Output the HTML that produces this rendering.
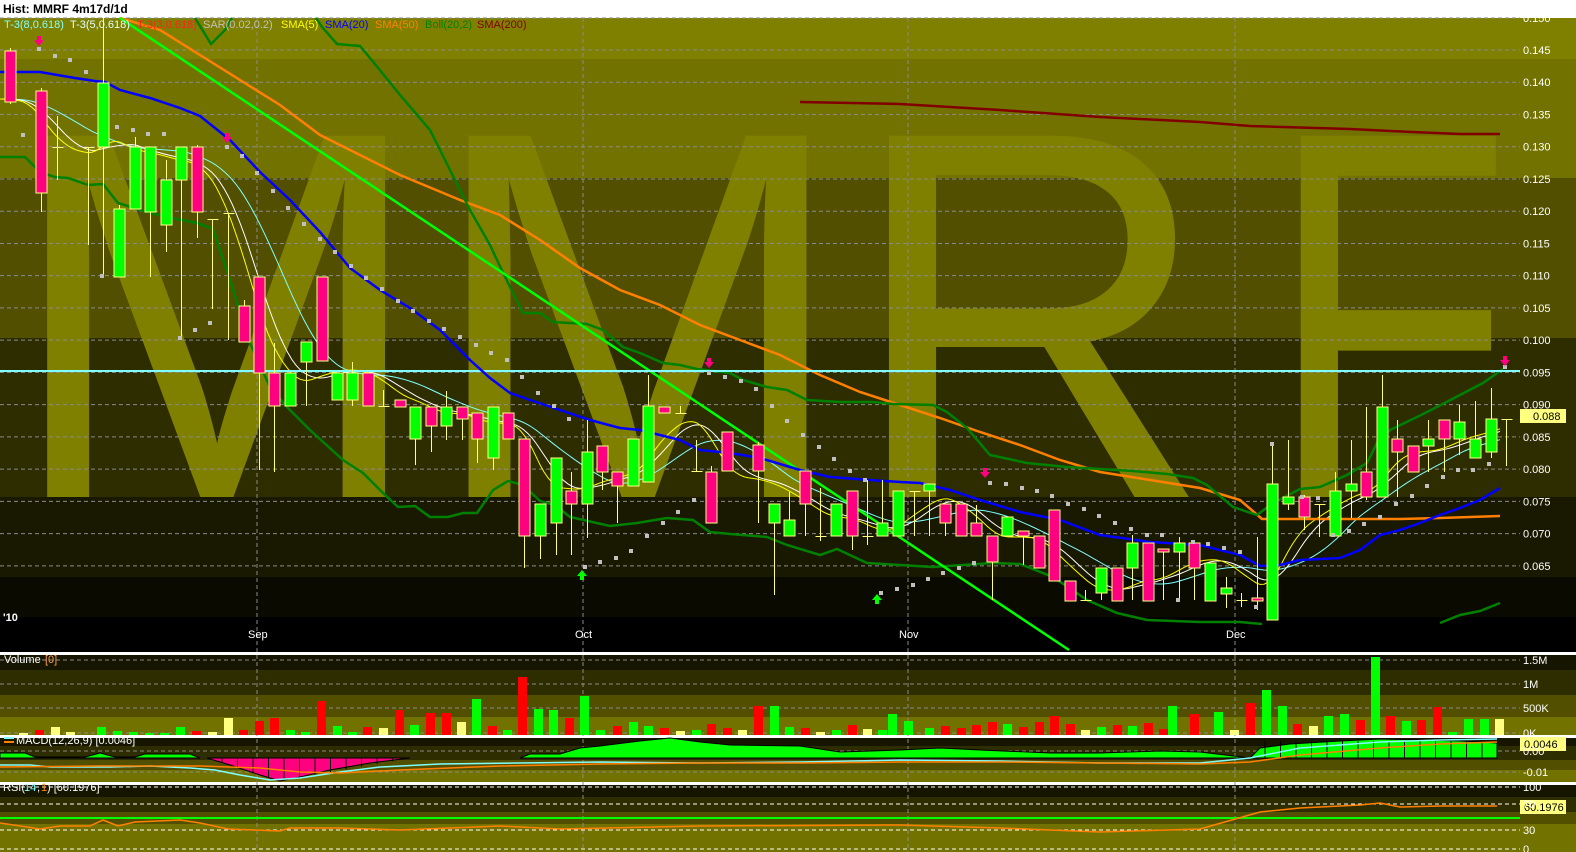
<!DOCTYPE html>
<html><head><meta charset="utf-8"><style>
html,body{margin:0;padding:0;background:#fff;width:1576px;height:852px;overflow:hidden}
svg{display:block;font-family:"Liberation Sans",Arial,sans-serif}
</style></head><body>
<svg id="s" width="1576" height="852" viewBox="0 0 1576 852" xmlns="http://www.w3.org/2000/svg">
<rect x="0" y="0" width="1576" height="18" fill="#fff"/>
<text x="3" y="13" font-size="12" font-weight="bold" fill="#000">Hist: MMRF 4m17d/1d</text>
<g id="bands"></g>
<text y="497" font-size="525" fill="#808000" transform="scale(0.962,1)"><tspan x="6">M</tspan><tspan x="444">M</tspan><tspan x="881">R</tspan></text>
<text x="0" y="497" font-size="525" fill="#808000" transform="translate(1268,0) scale(0.76,1)">F</text>
<g id="grid"></g>
<g id="lines"></g>
<g id="candles"></g>
<g id="top"></g>
<g font-size="11">
<text x="4" y="28" fill="#80ffff">T-3(8,0.618)</text>
<text x="70" y="28" fill="#e0ffff">T-3(5,0.618)</text>
<text x="137" y="28" fill="#ff2020">T-3(3,0.618)</text>
<text x="203" y="28" fill="#c0c0c0">SAR(0.02,0.2)</text>
<text x="281" y="28" fill="#ffff00">SMA(5)</text>
<text x="325" y="28" fill="#0000ff">SMA(20)</text>
<text x="375" y="28" fill="#ff8000">SMA(50)</text>
<text x="425" y="28" fill="#008000">Boll(20,2)</text>
<text x="477" y="28" fill="#800000">SMA(200)</text>
<text x="3" y="621" fill="#fff" font-weight="bold">'10</text>
<text x="248" y="638" fill="#fff">Sep</text>
<text x="575" y="638" fill="#fff">Oct</text>
<text x="899" y="638" fill="#fff">Nov</text>
<text x="1226" y="638" fill="#fff">Dec</text>
<text x="4" y="663" fill="#fff">Volume</text><text x="45" y="663" fill="#ffa040">[0]</text>
<text x="16" y="744" fill="#fff">MACD(12,26,9)  [0.0046]</text>
<text x="3" y="791" fill="#fff">RSI(</text><text x="24" y="791" fill="#80ffff">14</text><text x="37" y="791" fill="#fff">,</text><text x="41" y="791" fill="#ff8000">1</text><text x="47" y="791" fill="#fff">)  [60.1976]</text>
</g>
<g id="axis" font-size="11" fill="#fff"></g>
</svg>
<script>
var NS="http://www.w3.org/2000/svg";
function el(p,t,a){var e=document.createElementNS(NS,t);for(var k in a)e.setAttribute(k,a[k]);document.getElementById(p).appendChild(e);return e;}
function pts(a){var s=[];for(var i=0;i<a.length;i+=2)s.push(a[i]+","+a[i+1]);return s.join(" ");}
[[18,59,"#808000"],[59,178,"#727200"],[178,338,"#525000"],[338,497,"#2e2d00"],[497,577,"#191800"],[577,617,"#0a0a00"],[617,652,"#000"],
[652,655,"#fff"],[655,670,"#151500"],[670,695,"#2e2d00"],[695,717,"#525000"],[717,735,"#727200"],[735,738,"#fff"],
[738,746,"#151500"],[746,760,"#2e2d00"],[760,770,"#525000"],[770,782,"#727200"],[782,785,"#fff"],
[785,797,"#151500"],[797,812,"#2e2d00"],[812,824,"#525000"],[824,852,"#727200"]].forEach(function(b){el("bands","rect",{x:0,y:b[0],width:1576,height:b[1]-b[0],fill:b[2]});});
for(var i=0;i<=17;i++){var p=0.150-i*0.005;var y=50+(0.145-p)/0.005*32.24;if(y<18)y=18;
el("grid","line",{x1:0,x2:1520,y1:y,y2:y,stroke:"#8a8a8a","stroke-dasharray":"4,3","stroke-width":1});
var t=el("axis","text",{x:1523,y:y+4});t.textContent=p.toFixed(3);}
[257,583,908,1235].forEach(function(x){el("grid","line",{x1:x,x2:x,y1:18,y2:852,stroke:"#8a8a8a","stroke-dasharray":"4,3"});});
[[660,"1.5M"],[684,"1M"],[708,"500K"],[733,"0K"],[751,"0.00"],[772,"-0.01"],[787,"100"],[804,"70"],[830,"30"],[849,"0"]].forEach(function(g){
el("grid","line",{x1:0,x2:1520,y1:g[0],y2:g[0],stroke:(g[0]>=784?"#fff":"#8a8a8a"),"stroke-dasharray":"4,3"});
var t=el("axis","text",{x:1523,y:g[0]+4});t.textContent=g[1];});
el("grid","line",{x1:0,x2:1520,y1:818,y2:818,stroke:"#00ff00","stroke-width":2});
function pl(a,c,w){el("lines","polyline",{points:pts(a),fill:"none",stroke:c,"stroke-width":w});}
var red=[0,99,20,103,37,127,53,145,72,153,88,153,100,136,110,143,118,147,137,153,150,154,165,160,180,161,193,168,210,193,230,247,250,317,263,350,277,370,290,384,307,377,330,370,352,370,373,380,387,393,403,400,417,405,430,413,457,414,477,423,497,423,512,428,523,453,540,487,573,490,587,483,613,476,630,471,643,450,657,433,678,418,695,427,710,458,727,477,750,479,772,487,790,498,820,517,843,518,867,530,882,531,900,517,930,497,943,499,967,517,987,537,1020,537,1033,540,1050,557,1067,573,1087,590,1113,590,1133,580,1150,580,1183,562,1200,559,1213,560,1227,570,1240,580,1257,590,1267,570,1287,533,1303,520,1330,503,1350,493,1365,490,1373,477,1383,465,1397,453,1430,450,1447,442,1460,437,1480,432,1500,425];
function ry(x){if(x<=red[0])return red[1];for(var i=2;i<red.length;i+=2){if(x<=red[i]){var f=(x-red[i-2])/(red[i]-red[i-2]);return red[i-1]+f*(red[i+1]-red[i-1]);}}return red[red.length-1];}
function sm(w,off){var a=[];for(var x=0;x<=1500;x+=4){var s=0,n=0;for(var k=x-w;k<=x;k+=2){s+=ry(Math.max(0,k));n++;}a.push(x,s/n+off);}return a;}
pl(sm(90,0),"#80ffff",1);
pl(sm(40,0),"#ffffff",1);
pl(sm(22,0),"#ffff00",1);
pl([800,102,900,104,1000,110,1100,117,1200,122,1250,126,1350,129,1412,132,1460,134,1500,134],"#800000",2.5);
pl([120,18,160,30,200,55,240,80,280,105,320,135,360,155,400,175,460,200,500,215,540,240,580,268,620,290,660,305,700,325,740,340,780,355,820,375,860,392,900,405,940,418,980,432,1020,445,1060,460,1100,472,1150,480,1200,488,1240,500,1262,519,1300,519,1400,519,1440,518,1500,516],"#ff8000",2.5);
pl([195,18,211,44,225,30,232,18],"#008000",2.5);
pl([316,18,322,27,337,44,360,46,379,69,400,95,430,130,450,170,470,210,490,245,497,260,510,287,523,313,540,313,553,322,587,324,603,330,623,347,640,353,663,363,680,365,697,369,730,373,743,380,767,387,787,390,807,400,840,402,873,402,893,404,933,405,947,412,967,428,990,455,1027,463,1067,467,1100,469,1133,471,1167,474,1193,478,1207,485,1233,507,1257,515,1273,503,1300,489,1320,487,1347,475,1367,463,1377,443,1390,430,1417,417,1433,409,1460,395,1483,383,1503,369],"#008000",2.5);
pl([0,157,25,157,40,172,55,177,68,178,88,185,103,184,118,203,147,212,167,217,197,223,213,229,230,280,250,343,270,387,287,407,310,430,343,460,363,473,383,493,398,507,415,506,430,517,448,517,463,513,477,513,493,490,508,481,523,485,540,501,555,505,570,517,610,526,637,523,667,518,693,520,710,532,730,534,767,537,787,545,820,555,837,549,867,563,933,567,993,563,1020,564,1053,577,1087,600,1117,613,1147,620,1200,622,1240,622,1262,624],"#008000",2.5);
pl([1440,623,1460,615,1480,611,1500,603],"#008000",2.5);
pl([120,18,1069,650],"#00ff00",2.5);
pl([0,371,1520,371],"#80ffff",2);
pl([0,72,40,72,75,78,95,81,105,82,120,90,150,98,180,108,200,116,230,140,260,172,290,200,320,232,350,268,380,290,410,308,440,330,470,360,490,378,510,393,530,400,560,410,590,420,620,428,640,430,680,440,700,450,730,453,760,458,800,470,830,477,870,480,900,482,920,483,950,490,980,500,1020,512,1060,520,1100,535,1150,542,1200,545,1240,555,1260,566,1280,565,1300,560,1340,558,1360,550,1380,535,1400,530,1420,523,1440,515,1460,508,1480,500,1500,488],"#0000ff",2.5);
[39,49,55,56,70,60,86,72,23,135,117,127,133,130,148,134,164,134,227,147,242,156,257,173,273,191,288,208,304,224,320,239,335,252,102,276,180,338,195,330,210,323,351,266,366,278,382,289,398,301,413,311,429,321,444,329,460,337,476,345,491,353,507,360,522,377,538,393,554,406,569,419,585,567,600,562,616,558,631,551,647,536,663,523,678,512,694,500,709,373,725,377,741,381,756,389,772,406,787,421,803,435,819,447,834,459,850,471,865,480,881,593,897,589,913,585,928,579,943,573,959,568,974,563,990,483,1006,484,1022,488,1037,491,1052,496,1068,504,1084,509,1099,516,1115,523,1131,529,1147,535,1162,535,1178,600,1193,542,1208,544,1224,548,1240,552,1256,607,1272,444,1302,497,1318,498,1333,535,1349,531,1364,524,1380,517,1396,504,1412,496,1427,486,1443,477,1458,470,1473,470,1489,464,1505,367].forEach(function(v,i,a){if(i%2==0)el("top","rect",{x:v-2,y:a[i+1]-2,width:4,height:4,fill:"#c0c0c0"});});
function arr(x,y,c,down){var d=down?("M"+(x-2)+","+(y-8)+"h4v4h3l-5,6l-5,-6h3z"):("M"+(x-2)+","+(y+8)+"h4v-4h3l-5,-6l-5,6h3z");el("top","path",{d:d,fill:c});}
arr(39,44,"#ff0080",1);arr(227,141,"#ff0080",1);arr(709,366,"#ff0080",1);arr(985,476,"#ff0080",1);arr(1505,364,"#ff0080",1);
arr(582,572,"#00ff00",0);arr(877,596,"#00ff00",0);
var C=[[10,51,102,48,104,'p'],[41,91,193,88,212,'p'],[57,147,147,116,180,'d'],[88,147,147,147,245,'d'],[103,83,147,18,275,'g'],[119,209,277,205,277,'g'],[135,147,209,137,209,'g'],[150,147,212,147,277,'g'],[166,180,225,160,252,'g'],[181,147,180,147,337,'g'],[197,147,212,145,238,'p'],[212,219,219,219,309,'d'],[228,213,340,213,340,'d'],[244,306,342,300,342,'p'],[259,277,373,277,470,'p'],[274,373,406,343,472,'p'],[290,373,406,373,406,'g'],[306,342,362,342,406,'g'],[322,277,361,277,361,'p'],[337,373,400,373,400,'g'],[352,373,400,362,406,'g'],[368,373,406,373,406,'p'],[383,406,406,390,406,'d'],[400,400,407,400,407,'p'],[415,407,439,407,465,'g'],[431,407,426,407,452,'p'],[446,407,426,391,440,'g'],[462,407,419,407,440,'p'],[477,413,439,413,463,'p'],[493,407,458,407,470,'g'],[508,413,439,413,439,'p'],[524,439,536,439,568,'p'],[540,504,536,504,559,'g'],[556,458,523,472,555,'g'],[571,491,504,472,555,'p'],[587,452,504,420,538,'g'],[602,446,472,446,490,'p'],[617,472,486,472,523,'p'],[633,439,486,439,486,'g'],[648,406,482,375,482,'g'],[664,407,413,407,413,'p'],[680,413,413,406,413,'d'],[696,471,471,440,471,'d'],[711,472,523,466,523,'p'],[727,432,471,432,471,'p'],[758,445,471,442,523,'p'],[774,504,523,504,595,'g'],[789,520,536,492,536,'g'],[805,471,504,471,536,'p'],[820,536,536,488,541,'d'],[836,504,536,504,536,'g'],[852,491,536,491,550,'p'],[867,536,536,480,545,'d'],[882,523,536,480,536,'g'],[898,491,536,491,536,'g'],[914,491,491,491,536,'d'],[929,484,491,484,536,'g'],[945,504,523,504,536,'p'],[961,504,536,504,536,'p'],[976,523,536,505,536,'p'],[992,536,562,536,600,'p'],[1007,517,536,517,536,'g'],[1023,531,536,531,565,'p'],[1039,536,568,536,568,'p'],[1054,510,581,510,581,'p'],[1070,581,601,581,601,'p'],[1085,600,600,590,600,'d'],[1101,568,593,568,600,'g'],[1117,568,601,568,601,'p'],[1132,543,568,535,600,'g'],[1148,543,601,543,601,'p'],[1163,549,552,549,600,'p'],[1179,543,552,537,600,'g'],[1194,543,568,543,600,'p'],[1210,563,601,563,601,'g'],[1226,588,594,577,608,'g'],[1241,600,600,593,607,'d'],[1257,598,601,537,610,'p'],[1272,484,620,446,620,'g'],[1288,497,504,440,510,'g'],[1304,497,517,495,530,'p'],[1319,504,504,504,537,'d'],[1335,491,536,472,536,'g'],[1351,484,491,440,518,'g'],[1366,472,497,407,500,'p'],[1382,407,497,375,497,'g'],[1397,439,452,420,497,'p'],[1413,446,472,446,472,'p'],[1428,439,446,420,472,'g'],[1444,420,439,420,472,'p'],[1459,422,439,405,455,'g'],[1475,439,458,401,458,'g'],[1491,419,452,388,458,'g'],[1506,419,419,419,466,'d']];
C.forEach(function(c){var x=c[0]+0.5;
el("candles","line",{x1:x,x2:x,y1:c[3],y2:c[4],stroke:"#ffff80","stroke-width":1});
if(c[5]=='d'){el("candles","line",{x1:x-5,x2:x+6,y1:c[1]+.5,y2:c[1]+.5,stroke:"#ffff80"});}
else el("candles","rect",{x:c[0]-5,y:c[1],width:11,height:Math.max(2,c[2]-c[1]),fill:c[5]=='g'?"#00ff00":"#ff0080",stroke:"#ffff80","stroke-width":1});});
el("top","rect",{x:1520,y:409,width:46,height:14,fill:"#ffff80"});
var t=el("top","text",{x:1533,y:420,"font-size":11,fill:"#000"});t.textContent="0.088";
var V=[[23,733,'y'],[39,730,'r'],[55,727,'y'],[70,732,'y'],[101,727,'g'],[117,731,'g'],[133,732,'g'],[149,733,'g'],[164,733,'g'],[180,727,'g'],[196,731,'r'],[212,732,'y'],[228,718,'y'],[243,730,'r'],[259,721,'r'],[274,718,'r'],[290,730,'g'],[305,732,'g'],[321,701,'r'],[337,726,'g'],[352,732,'g'],[367,727,'r'],[383,728,'y'],[399,710,'r'],[414,725,'g'],[430,713,'r'],[446,713,'r'],[461,722,'y'],[476,699,'g'],[492,726,'r'],[507,730,'g'],[522,677,'r'],[538,709,'g'],[553,710,'g'],[569,718,'r'],[584,696,'g'],[600,730,'g'],[617,726,'r'],[633,722,'g'],[648,726,'g'],[664,728,'r'],[680,731,'y'],[696,730,'g'],[711,724,'r'],[727,728,'r'],[742,730,'y'],[758,706,'r'],[774,706,'g'],[789,727,'g'],[805,728,'r'],[820,732,'y'],[836,730,'g'],[852,725,'r'],[867,729,'y'],[882,730,'g'],[892,714,'g'],[908,721,'g'],[929,728,'g'],[945,726,'r'],[961,728,'r'],[976,725,'r'],[992,722,'r'],[1007,724,'g'],[1023,727,'r'],[1039,722,'r'],[1054,716,'r'],[1070,724,'r'],[1085,730,'y'],[1101,727,'g'],[1117,725,'r'],[1132,726,'g'],[1148,723,'r'],[1163,729,'r'],[1172,706,'g'],[1194,714,'r'],[1218,712,'g'],[1234,730,'y'],[1250,703,'r'],[1266,690,'g'],[1282,706,'g'],[1297,724,'r'],[1313,726,'y'],[1328,716,'g'],[1344,714,'g'],[1360,720,'r'],[1375,657,'g'],[1390,716,'r'],[1406,721,'g'],[1421,720,'r'],[1437,707,'r'],[1452,732,'g'],[1468,719,'g'],[1484,719,'g'],[1499,719,'y']];
var vc={r:"#ff0000",g:"#00ff00",y:"#ffff80"};
V.forEach(function(v){el("top","rect",{x:v[0]-4,y:v[1],width:9,height:735-v[1],fill:vc[v[2]]});});
el("top","polygon",{points:pts([207,758,230,765,260,775,280,781,300,777,330,770,370,763,410,758]),fill:"#ff0080",stroke:"#000","stroke-width":1});
for(var x=222;x<400;x+=15.5)el("top","line",{x1:x,x2:x,y1:758,y2:758+Math.max(0,(x<280?(x-207)/73*23:(410-x)/130*23)),stroke:"#000"});
el("top","polygon",{points:pts([0,758,0,753,25,753,35,757,85,757,100,753,115,757,135,757,145,754,190,754,200,758]),fill:"#00ff00",stroke:"#000"});
el("top","polygon",{points:pts([520,758,530,754,560,754,580,748,600,746,640,741,670,738,700,742,730,745,800,746,840,752,900,750,940,748,980,750,1050,753,1100,753,1160,751,1200,752,1250,758]),fill:"#00ff00",stroke:"#000"});
el("top","polygon",{points:pts([1250,758,1260,748,1290,744,1340,741,1380,739,1420,740,1460,741,1480,742,1497,743,1497,758]),fill:"#00ff00",stroke:"#000"});
for(var x=1265;x<1497;x+=15.5)el("top","line",{x1:x,x2:x,y1:741,y2:758,stroke:"#000"});
el("top","polyline",{points:pts([0,765,30,765,50,767,110,767,150,766,190,768,215,770,240,775,270,780,300,778,340,772,380,767,440,764,520,763,600,762,700,763,800,762,900,760,1000,761,1100,763,1200,763,1250,758,1300,748,1380,742,1440,740,1497,739]),fill:"none",stroke:"#80ffff","stroke-width":1.5});
el("top","polyline",{points:pts([0,767,100,766,200,766,260,768,300,772,340,773,400,770,500,766,600,764,700,763,800,763,900,762,1000,762,1100,763,1200,764,1250,762,1300,755,1380,748,1440,744,1497,742]),fill:"none",stroke:"#ff8000","stroke-width":1.5});
el("top","rect",{x:1520,y:737,width:46,height:14,fill:"#ffff80"});
t=el("top","text",{x:1524,y:748,"font-size":11,fill:"#000"});t.textContent="0.0046";
el("top","rect",{x:4,y:737,width:10,height:2,fill:"#80ffff"});el("top","rect",{x:4,y:741,width:10,height:2,fill:"#ff8000"});
el("top","polyline",{points:pts([0,823,40,829,60,826,90,826,103,820,118,826,135,822,180,820,200,823,228,829,280,831,290,828,340,828,400,830,500,826,560,829,700,826,900,825,1000,828,1100,832,1200,829,1260,812,1300,808,1360,805,1380,803,1400,807,1440,806,1497,806]),fill:"none",stroke:"#ff8000","stroke-width":1.5});
el("top","rect",{x:1520,y:800,width:46,height:14,fill:"#ffff80"});
t=el("top","text",{x:1524,y:811,"font-size":11,fill:"#000"});t.textContent="60.1976";
</script>
</body></html>
